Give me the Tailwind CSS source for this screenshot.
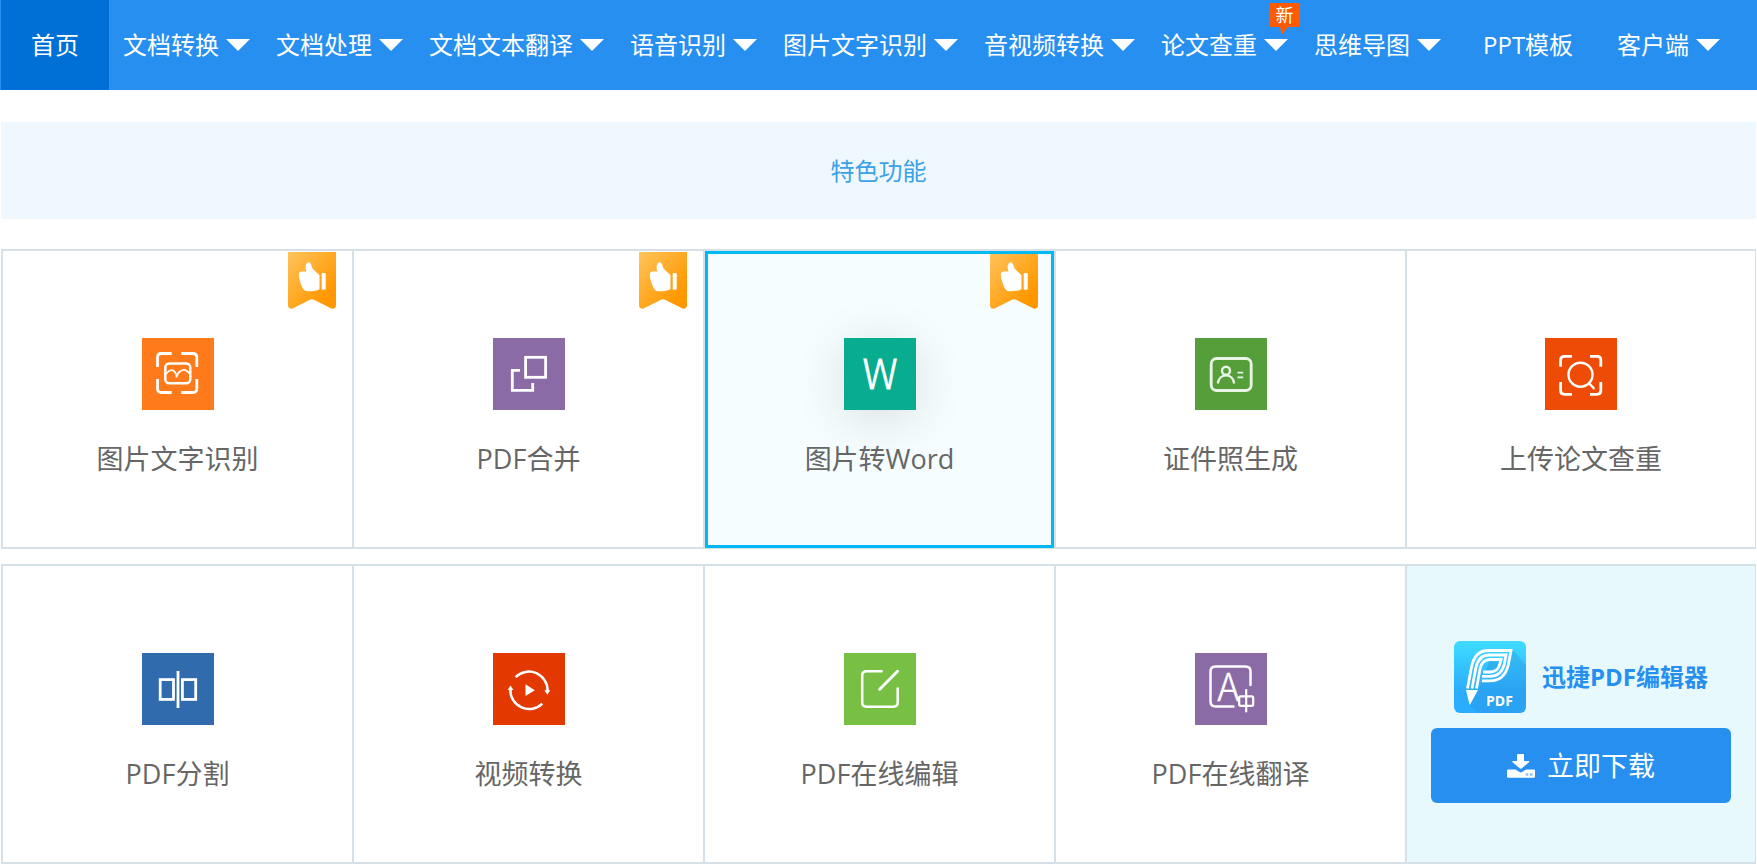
<!DOCTYPE html>
<html lang="zh-CN">
<head>
<meta charset="utf-8">
<meta name="viewport" content="width=device-width, initial-scale=1">
<title>特色功能</title>
<script src="https://cdn.jsdelivr.net/npm/@tailwindcss/browser@4"></script>
</head>
<body class="bg-white font-['Open_Sans','Noto_Sans_CJK_SC',sans-serif] text-[#666]">

<svg class="absolute size-0" aria-hidden="true">
  <defs>
    <linearGradient id="ribbon-fill" x1="0" y1="0" x2="1" y2="1">
      <stop offset="0" stop-color="#ffc45c"/><stop offset="0.8" stop-color="#ff9800"/>
    </linearGradient>
    <linearGradient id="logo-fill" x1="0" y1="0" x2="0" y2="1">
      <stop offset="0" stop-color="#3fdcff"/><stop offset="0.7" stop-color="#2aacff"/>
    </linearGradient>
  </defs>
  <symbol id="caret" viewBox="0 0 24 12"><path d="M0 0H24L12 12Z" fill="#fff"/></symbol>
  <symbol id="ribbon" viewBox="0 0 48 57">
    <path d="M0 0H48V53Q48 57 44 56.8L26 47.8Q24 46.8 22 47.8L4 56.8Q0 57 0 53Z" fill="url(#ribbon-fill)"/>
    <path d="M20 10.4c2-.3 3 1.100 3.400 3.200c.8 4 4.600 5.900 8.100 9.700V37.200c-3 1.700-8.500 2.300-12.500 2c-3-.3-4.200-2.200-5.500-5.700c-1.500-4-2.800-8-2.700-11c.1-2 1-2.800 3-3h4.700c-1.300-3.500-1.500-8 1.500-9.100z" fill="#fff"/>
    <rect x="33.700" y="21" width="4" height="16.700" rx="1" fill="#fff"/>
  </symbol>
</svg>

<header class="bg-[#278ff0] pl-px">
  <nav aria-label="主导航">
    <ul class="flex h-[90px] text-2xl whitespace-nowrap text-white">
      <li class="flex"><a href="#" aria-current="page" class="flex items-center bg-[#006fd6] px-[30px]">首页</a></li>
      <li class="flex"><a href="#" class="flex items-center gap-[7px] pr-3 pl-3.5">文档转换<svg class="h-3 w-6"><use href="#caret"/></svg></a></li>
      <li class="flex"><a href="#" class="flex items-center gap-[7px] pr-3 pl-3.5">文档处理<svg class="h-3 w-6"><use href="#caret"/></svg></a></li>
      <li class="flex"><a href="#" class="flex items-center gap-[7px] pr-3 pl-3.5">文档文本翻译<svg class="h-3 w-6"><use href="#caret"/></svg></a></li>
      <li class="flex"><a href="#" class="flex items-center gap-[7px] pr-3 pl-3.5">语音识别<svg class="h-3 w-6"><use href="#caret"/></svg></a></li>
      <li class="flex"><a href="#" class="flex items-center gap-[7px] pr-3 pl-3.5">图片文字识别<svg class="h-3 w-6"><use href="#caret"/></svg></a></li>
      <li class="flex"><a href="#" class="flex items-center gap-[7px] pr-3 pl-3.5">音视频转换<svg class="h-3 w-6"><use href="#caret"/></svg></a></li>
      <li class="relative flex">
        <a href="#" class="flex items-center gap-[7px] pr-3 pl-3.5">论文查重<svg class="h-3 w-6"><use href="#caret"/></svg></a>
        <span class="absolute top-[3px] right-0 flex h-6 w-[31px] items-center justify-center rounded-xs bg-[#ff5a00] text-lg">新
          <svg class="absolute top-full left-[11px] h-2 w-2" viewBox="0 0 8 8"><path d="M0 0H8L1.500 8Z" fill="#ff5a00"/></svg>
        </span>
      </li>
      <li class="flex"><a href="#" class="flex items-center gap-[7px] pr-3 pl-3.5">思维导图<svg class="h-3 w-6"><use href="#caret"/></svg></a></li>
      <li class="flex"><a href="#" class="flex items-center px-[30px]">PPT模板</a></li>
      <li class="flex"><a href="#" class="flex items-center gap-[7px] pr-3 pl-3.5">客户端<svg class="h-3 w-6"><use href="#caret"/></svg></a></li>
    </ul>
  </nav>
</header>

<main class="px-px">
  <h1 class="mt-8 flex h-[97px] items-center justify-center bg-[#eff7ff] text-2xl text-[#3ca1e6]">特色功能</h1>

  <ul class="mt-[30px] grid grid-cols-5 border-y-2 border-[#d5e1e6] text-[27px] leading-10">
    <li class="relative border-l-2 border-[#d5e1e6]">
      <a href="#" class="flex flex-col items-center pt-[87px] pb-[68px]">
        <svg class="absolute top-px right-4 h-[57px] w-12"><use href="#ribbon"/></svg>
        <svg class="size-18 bg-[#ff7a1a]" viewBox="0 0 72 72" fill="none" stroke="#fff" stroke-width="2.800">
          <path d="M15.500 29V19.500Q15.500 15.500 19.500 15.500H29.700M39.300 15.500H50.800Q54.800 15.500 54.800 19.500V29M54.800 41V50.500Q54.800 54.500 50.800 54.500H39.300M29.700 54.500H19.500Q15.500 54.500 15.500 50.500V41"/>
          <rect x="23.300" y="25.500" width="25" height="19.700" rx="4" stroke-width="2.500"/>
          <path d="M24 36Q29 29.500 33 34Q34.500 36 34.500 39.500Q35 35.500 38 33.500Q43.500 29.500 48 36" stroke-width="1.700"/>
        </svg>
        <span class="mt-[29px]">图片文字识别</span>
      </a>
    </li>
    <li class="relative border-l-2 border-[#d5e1e6]">
      <a href="#" class="flex flex-col items-center pt-[87px] pb-[68px]">
        <svg class="absolute top-px right-4 h-[57px] w-12"><use href="#ribbon"/></svg>
        <svg class="size-18 bg-[#8b6ba6]" viewBox="0 0 72 72" fill="none" stroke="#fff" stroke-width="2.800">
          <rect x="32.600" y="19.300" width="20" height="20"/>
          <path d="M27 32.300H19.300V52.300H39.700V45"/>
        </svg>
        <span class="mt-[29px]">PDF合并</span>
      </a>
    </li>
    <li class="relative border-l-2 border-[#d5e1e6] bg-[#f5fdff]">
      <a href="#" class="flex flex-col items-center pt-[87px] pb-[68px]">
        <svg class="absolute top-px right-4 h-[57px] w-12"><use href="#ribbon"/></svg>
        <svg class="size-18 bg-[#08ac8f] shadow-[0_8px_50px_rgba(0,0,0,0.12)]" viewBox="0 0 72 72">
          <text x="36" y="51" text-anchor="middle" fill="#fff" stroke="#fff" stroke-width="0.800" font-family="Noto Sans CJK SC, sans-serif" font-weight="300" font-size="41">W</text>
        </svg>
        <span class="mt-[29px]">图片转Word</span>
        <span class="absolute inset-x-0 top-0 -bottom-px border-3 border-[#00b9f2]"></span>
      </a>
    </li>
    <li class="border-l-2 border-[#d5e1e6]">
      <a href="#" class="flex flex-col items-center pt-[87px] pb-[68px]">
        <svg class="size-18 bg-[#559e3a]" viewBox="0 0 72 72" fill="none" stroke="#e9f4e4" stroke-width="2.400">
          <rect x="16.200" y="20.500" width="40" height="32" rx="5.500" stroke-width="2.800"/>
          <circle cx="31" cy="32.700" r="4"/>
          <path d="M22.800 45.500Q24 37.500 31 37.500T39.200 45.500" stroke-width="2.200"/>
          <path d="M42.500 34.700H48.200M42.500 39.300H48.200" stroke-width="1.800"/>
        </svg>
        <span class="mt-[29px]">证件照生成</span>
      </a>
    </li>
    <li class="border-r border-l-2 border-[#d5e1e6]">
      <a href="#" class="flex flex-col items-center pt-[87px] pb-[68px]">
        <svg class="size-18 bg-[#ed4b06]" viewBox="0 0 72 72" fill="none" stroke="#fff" stroke-width="2.800">
          <path d="M15.600 28.700V22Q15.600 18.300 19.500 18.300H27M45 18.300H52Q55.800 18.300 55.800 22V28.700M55.800 44V52.500Q55.800 56.300 52 56.300H45M27 56.300H19.500Q15.600 56.300 15.600 52.500V44"/>
          <circle cx="35.500" cy="36.700" r="12" stroke-width="2.400"/>
          <path d="M43.800 45L49.400 51" stroke-width="2.400"/>
        </svg>
        <span class="mt-[29px]">上传论文查重</span>
      </a>
    </li>
  </ul>

  <ul class="mt-[15px] grid grid-cols-5 border-y-2 border-[#d5e1e6] text-[27px] leading-10">
    <li class="border-l-2 border-[#d5e1e6]">
      <a href="#" class="flex flex-col items-center pt-[87px] pb-[68px]">
        <svg class="size-18 bg-[#306bad]" viewBox="0 0 72 72" fill="none" stroke="#fff" stroke-width="2.800">
          <rect x="18.200" y="26.600" width="13.300" height="19.800"/>
          <rect x="40.400" y="26.600" width="13.300" height="19.800"/>
          <path d="M36 18V55"/>
        </svg>
        <span class="mt-[29px]">PDF分割</span>
      </a>
    </li>
    <li class="border-l-2 border-[#d5e1e6]">
      <a href="#" class="flex flex-col items-center pt-[87px] pb-[68px]">
        <svg class="size-18 bg-[#e33900]" viewBox="0 0 72 72" fill="none" stroke="#fff" stroke-width="2.500">
          <path d="M22.600 24.200A18.700 18.700 0 0 1 54.600 38M49.300 50.600A18.700 18.700 0 0 1 17.400 36.500"/>
          <path d="M51.300 37.200H57.300L54.300 41.800ZM14.600 37L17.500 32.400L20.400 37ZM32.500 31.300L41.800 37.200L32.500 43Z" fill="#fff" stroke="none"/>
        </svg>
        <span class="mt-[29px]">视频转换</span>
      </a>
    </li>
    <li class="border-l-2 border-[#d5e1e6]">
      <a href="#" class="flex flex-col items-center pt-[87px] pb-[68px]">
        <svg class="size-18 bg-[#78c043]" viewBox="0 0 72 72" fill="none" stroke="#fff" stroke-width="2.500" stroke-linecap="round">
          <path d="M37.700 18.200H22.500Q18.200 18.200 18.200 22.500V49.500Q18.200 53.700 22.500 53.700H49.500Q53.700 53.700 53.700 49.500V35.500"/>
          <path d="M35.700 36.300L53.600 18.300" stroke-width="3"/>
        </svg>
        <span class="mt-[29px]">PDF在线编辑</span>
      </a>
    </li>
    <li class="border-l-2 border-[#d5e1e6]">
      <a href="#" class="flex flex-col items-center pt-[87px] pb-[68px]">
        <svg class="size-18 bg-[#8b6ba6]" viewBox="0 0 72 72" fill="none" stroke="#fff" stroke-width="2.500" stroke-linecap="round">
          <path d="M38.500 53.500H20.500Q15.500 53.500 15.500 48.500V18.500Q15.500 13.500 20.500 13.500H50.500Q55.500 13.500 55.500 18.500V32"/>
          <text x="33.500" y="48" text-anchor="middle" fill="#fff" stroke-width="0.400" font-family="Noto Sans CJK SC, sans-serif" font-weight="300" font-size="38">A</text>
          <rect x="44.200" y="43.300" width="14" height="9.500" rx="1.500" stroke-width="2.200"/>
          <path d="M51.200 37V58.500" stroke-width="2.200"/>
        </svg>
        <span class="mt-[29px]">PDF在线翻译</span>
      </a>
    </li>
    <li class="flex flex-col items-center border-r border-l-2 border-[#d5e1e6] bg-[#e8f9fd] px-6 pt-[75px]">
      <div class="flex items-center gap-4">
        <svg class="size-18 rounded-md" viewBox="0 0 72 72" fill="none">
          <rect width="72" height="72" fill="url(#logo-fill)"/>
          <path d="M59 9L72 24V72H24L15.500 64L24 49L28 42Q54 42 59 9Z" fill="#2b8fd8" fill-opacity="0.300"/>
          <path d="M32 29L35 20.500H46L44 25Q42 29.500 32 29Z" fill="#2b8fd8" fill-opacity="0.400"/>
          <g stroke="#fff" stroke-width="2.800">
            <path d="M13.500 47.500L17.500 26Q21 9.500 34 9.500H57L54.500 23Q51 39.800 36 39.800H28"/>
            <path d="M18 47.500L21.800 27Q24.500 14 35 14H52L50.300 23Q47.500 35.400 36 35.400H28"/>
            <path d="M22.500 47.500L26 28Q28 18.500 36 18.500H47L45.800 23Q44 31 36 31H29"/>
          </g>
          <path d="M12 49L24 49L15.800 64L14.600 60Z" fill="#fff"/>
          <text x="45.500" y="64.500" text-anchor="middle" fill="#fff" font-family="Open Sans, sans-serif" font-weight="700" font-size="14">PDF</text>
        </svg>
        <strong class="text-2xl font-bold text-[#278ff0]">迅捷PDF编辑器</strong>
      </div>
      <button type="button" class="mt-[15px] flex h-[75px] w-full max-w-[300px] items-center justify-center gap-3 rounded-md bg-[#278ff0] text-white">
        <svg class="h-[25px] w-7" viewBox="0 0 28 25">
          <path d="M10 2Q10 1 11 1H16Q17 1 17 2V8H21.500Q23 8 22 9.200L14.500 15.500Q13.700 16 13 15.500L5.500 9.200Q4.500 8 6 8H10Z" fill="#fff"/>
          <path d="M1 16.500H8.500L13 19.300Q13.800 19.700 14.500 19.300L19 16.500H27Q28 16.500 28 17.500V23.700Q28 24.700 27 24.700H1Q0 24.700 0 23.700V17.500Q0 16.500 1 16.500Z" fill="#fff"/>
          <path d="M18.700 20.300H21.300V22.800H18.700ZM22.900 20.300H25.500V22.800H22.900Z" fill="#8cc4f8"/>
        </svg>
        立即下载
      </button>
    </li>
  </ul>
</main>
</body>
</html>
